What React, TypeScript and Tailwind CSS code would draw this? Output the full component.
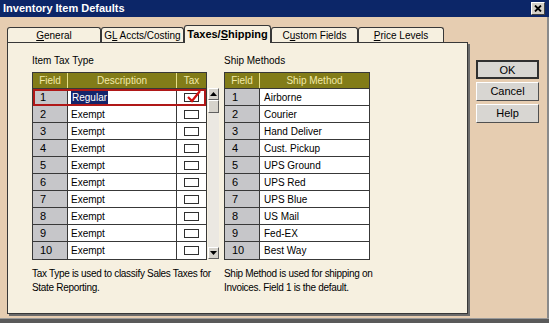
import React from "react";

const taxRows = [
  { id: 1, desc: "Regular", tax: true },
  { id: 2, desc: "Exempt", tax: false },
  { id: 3, desc: "Exempt", tax: false },
  { id: 4, desc: "Exempt", tax: false },
  { id: 5, desc: "Exempt", tax: false },
  { id: 6, desc: "Exempt", tax: false },
  { id: 7, desc: "Exempt", tax: false },
  { id: 8, desc: "Exempt", tax: false },
  { id: 9, desc: "Exempt", tax: false },
  { id: 10, desc: "Exempt", tax: false },
];

const shipRows = [
  "Airborne",
  "Courier",
  "Hand Deliver",
  "Cust. Pickup",
  "UPS Ground",
  "UPS Red",
  "UPS Blue",
  "US Mail",
  "Fed-EX",
  "Best Way",
];

const tabs = [
  { label: "General", u: "G", rest: "eneral", pre: "", w: "w-[94px]" },
  { label: "GL Accts/Costing", pre: "G", u: "L", rest: " Accts/Costing", w: "w-[83px]" },
  { label: "Taxes/Shipping", pre: "Taxes/", u: "S", rest: "hipping", w: "w-[87px]", active: true },
  { label: "Custom Fields", pre: "C", u: "u", rest: "stom Fields", w: "w-[87px]" },
  { label: "Price Levels", pre: "", u: "P", rest: "rice Levels", w: "w-[86px]" },
];

function Checkbox({ checked }: { checked: boolean }) {
  return (
    <div className="relative w-[15px] h-[9px] border border-[#303030] bg-white">
      {checked && (
        <svg className="absolute -top-[4px] left-[2px]" width="14" height="13" viewBox="0 0 14 13">
          <path d="M1 7 L5 11 L13 1" stroke="#d01010" strokeWidth="2.2" fill="none" />
        </svg>
      )}
    </div>
  );
}

function ScrollButton({ up }: { up: boolean }) {
  return (
    <div className="w-[11px] h-[12px] bg-[#d6d3cc] border border-t-white border-l-white border-r-[#606060] border-b-[#606060] flex items-center justify-center">
      <svg width="7" height="4" viewBox="0 0 7 4">
        {up ? <path d="M0 4 L3.5 0 L7 4 Z" fill="#000" /> : <path d="M0 0 L3.5 4 L7 0 Z" fill="#000" />}
      </svg>
    </div>
  );
}

function TaxTable() {
  return (
    <div className="flex">
      <div className="w-[175px] border border-[#383838] bg-white">
        <div className="flex h-[16px] bg-[#827c18] text-[#f2eaa8] border-b border-[#383838]">
          <div className="w-[35px] flex items-center justify-center border-r border-[#e8e088]">Field</div>
          <div className="w-[109px] flex items-center justify-center border-r border-[#e8e088]">Description</div>
          <div className="flex-1 flex items-center justify-center">Tax</div>
        </div>
        {taxRows.map((r) => (
          <div
            key={r.id}
            className={
              r.id === 1
                ? "relative flex h-[17px] border-b border-[#383838] outline-2 -outline-offset-2 outline-[#b01818]"
                : "flex h-[17px] border-b border-[#383838] last:border-b-0"
            }
          >
            <div className="w-[35px] bg-[#c6c6c9] border-r border-[#383838] pl-[7px] flex items-center text-[11px]">{r.id}</div>
            <div className="w-[109px] border-r border-[#383838] pl-[3px] flex items-center">
              {r.id === 1 ? <span className="bg-[#14246a] text-white leading-[13px] px-px">{r.desc}</span> : r.desc}
            </div>
            <div className="flex-1 flex items-center justify-center">
              <Checkbox checked={r.tax} />
            </div>
          </div>
        ))}
      </div>
      <div className="w-[11px] ml-px mt-[16px] mb-[1px] flex flex-col bg-[#ebe8e2]">
        <ScrollButton up />
        <div className="h-[13px] bg-[#d6d3cc] border border-t-white border-l-white border-r-[#606060] border-b-[#606060]" />
        <div className="flex-1" />
        <ScrollButton up={false} />
      </div>
    </div>
  );
}

function ShipTable() {
  return (
    <div className="w-[146px] border border-[#383838] bg-white">
      <div className="flex h-[16px] bg-[#827c18] text-[#f2eaa8] border-b border-[#383838]">
        <div className="w-[35px] flex items-center justify-center border-r border-[#e8e088]">Field</div>
        <div className="flex-1 flex items-center justify-center">Ship Method</div>
      </div>
      {shipRows.map((s, i) => (
        <div key={s} className="flex h-[17px] border-b border-[#383838] last:border-b-0">
          <div className="w-[35px] bg-[#c6c6c9] border-r border-[#383838] pl-[7px] flex items-center text-[11px]">{i + 1}</div>
          <div className="flex-1 pl-[4px] flex items-center">{s}</div>
        </div>
      ))}
    </div>
  );
}

export default function App() {
  return (
    <div
      className="w-[549px] h-[323px] bg-[#e6cdb1] flex flex-col text-[10px] text-black overflow-hidden"
      style={{ fontFamily: '"Liberation Sans", Arial, sans-serif' }}
    >
      {/* Title bar */}
      <div className="h-[17px] bg-[#0c2668] flex items-center justify-between pl-[3px] pr-[4px] shrink-0">
        <span className="text-white font-bold text-[11px]">Inventory Item Defaults</span>
        <div className="w-[14px] h-[13px] bg-[#d4d0c8] border border-t-white border-l-white border-r-[#404040] border-b-[#404040] flex items-center justify-center">
          <svg width="8" height="7" viewBox="0 0 8 7">
            <path d="M1 0.5 L7 6.5 M7 0.5 L1 6.5" stroke="#000" strokeWidth="1.8" />
          </svg>
        </div>
      </div>

      <div className="flex flex-1 border-r-2 border-[#8a8a8a]">
        {/* Left: tabs + panel */}
        <div className="flex flex-col pl-[7px] pt-[8px] pb-[4px]">
          <div className="flex items-end h-[17px]">
            {tabs.map((t) => (
              <div
                key={t.label}
                className={
                  t.active
                    ? `${t.w} h-[18px] relative z-10 -mb-px bg-[#f6f0e0] border-l border-t border-r border-[#383838] rounded-t-[3px] flex items-center justify-center font-bold text-[11px]`
                    : `${t.w} h-[15px] bg-[#f6f0e0] border-l border-t border-r border-[#383838] rounded-t-[3px] flex items-center justify-center`
                }
              >
                <span>
                  {t.pre}
                  <span className="underline">{t.u}</span>
                  {t.rest}
                </span>
              </div>
            ))}
          </div>
          <div className="w-[461px] flex-1 bg-[#f6f0e0] border border-[#383838] shadow-[2px_2px_0_#6b6b6b] flex gap-[5px] pl-[24px] pt-[10px]">
            <div className="flex flex-col">
              <div className="h-[19px]">Item Tax Type</div>
              <TaxTable />
              <p className="mt-[7px] leading-[14px] tracking-[-0.3px]">
                Tax Type is used to classify Sales Taxes for
                <br />
                State Reporting.
              </p>
            </div>
            <div className="flex flex-col">
              <div className="h-[19px]">Ship Methods</div>
              <ShipTable />
              <p className="mt-[7px] leading-[14px] tracking-[-0.3px]">
                Ship Method is used for shipping on
                <br />
                Invoices. Field 1 is the default.
              </p>
            </div>
          </div>
        </div>

        {/* Right: buttons */}
        <div className="flex flex-col gap-[3px] pl-[8px] pt-[43px]">
          <button className="w-[63px] h-[19px] bg-[#d8d6d2] border-2 border-[#303030] text-[11px]">OK</button>
          <button className="w-[63px] h-[19px] bg-[#d8d6d2] border border-t-white border-l-white border-r-[#505050] border-b-[#505050] text-[11px]">Cancel</button>
          <button className="w-[63px] h-[19px] bg-[#d8d6d2] border border-t-white border-l-white border-r-[#505050] border-b-[#505050] text-[11px]">Help</button>
        </div>
      </div>
      <div className="h-[5px] bg-[#5a5a5a] border-t border-[#9a9a9a] shrink-0" />
    </div>
  );
}
